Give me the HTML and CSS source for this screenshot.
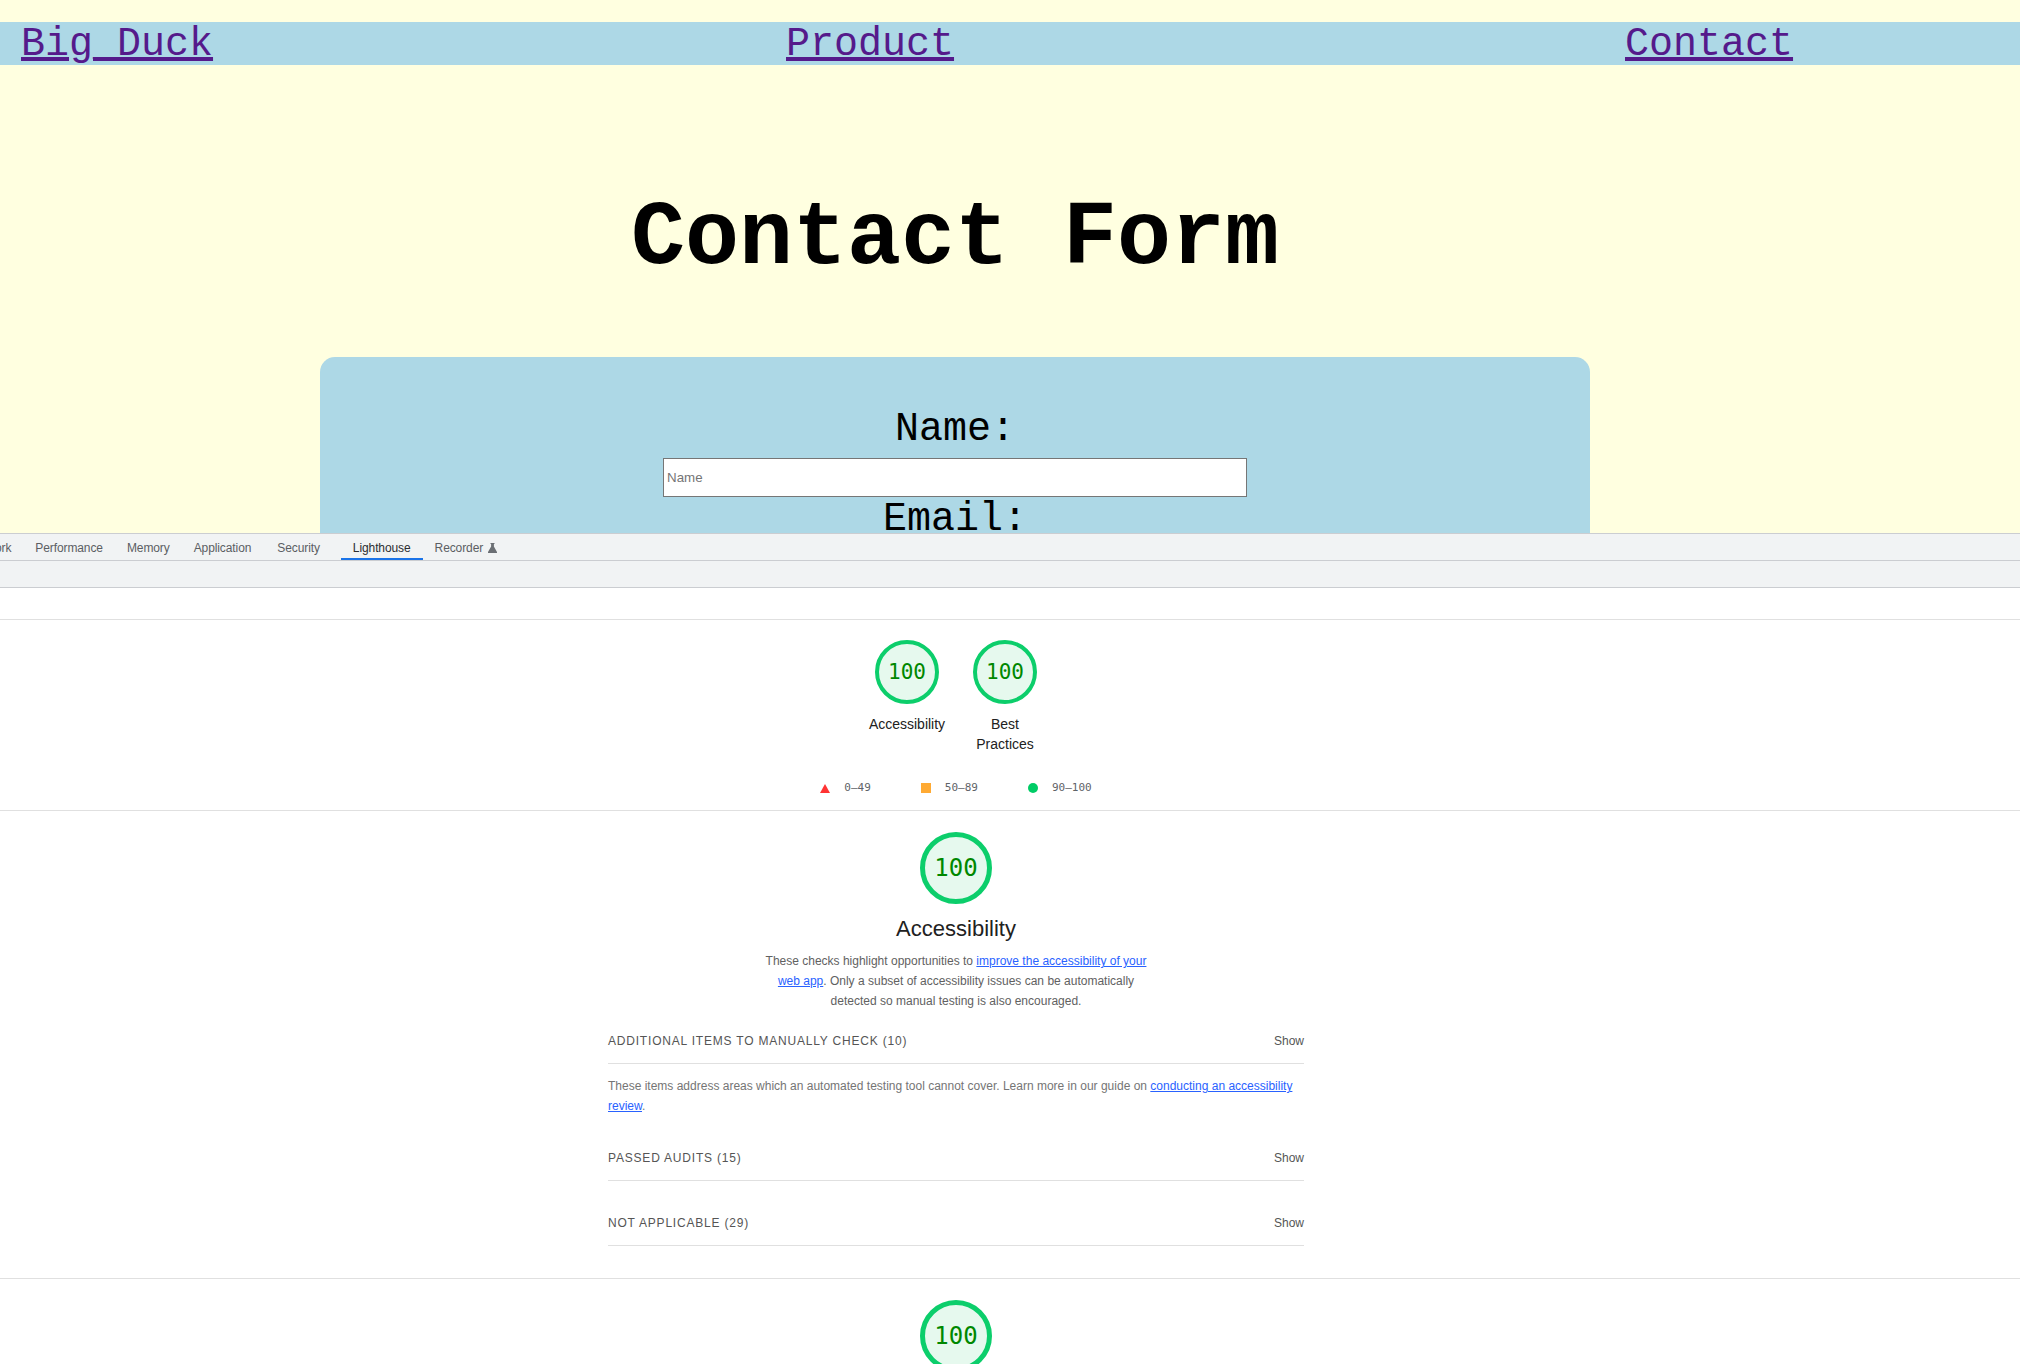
FILE: index.html
```html
<!DOCTYPE html>
<html lang="en">
<head>
<meta charset="utf-8">
<title>Contact Form</title>
<link rel="stylesheet" href="styles.css">
</head>
<body>
<div class="page">
  <nav class="nav">
    <a href="#" class="nav-link">Big_Duck</a>
    <a href="#" class="nav-link">Product</a>
    <a href="#" class="nav-link">Contact</a>
  </nav>
  <main class="main">
    <h1 class="title">Contact Form</h1>
    <form class="form-card">
      <label class="field-label" for="name">Name:</label>
      <input id="name" class="field-input" type="text" placeholder="Name">
      <label class="field-label" for="email">Email:</label>
      <input id="email" class="field-input" type="email" placeholder="Email">
    </form>
  </main>
</div>

<div class="devtools">
  <div class="tabbar">
    <div class="tab tab-network">Network</div>
    <div class="tab">Performance</div>
    <div class="tab">Memory</div>
    <div class="tab">Application</div>
    <div class="tab tab-security">Security</div>
    <div class="tab tab-active">Lighthouse</div>
    <div class="tab">Recorder
      <svg class="flask" width="9" height="10" viewBox="0 0 9 10"><path d="M2.5 0h4v1h-0.6v2.6L9 9v1H0V9l3.1-5.4V1h-0.6z" fill="#6b6f74"/></svg>
    </div>
  </div>
  <div class="toolbar"></div>
  <div class="report-topbar"></div>

  <section class="scores-section">
    <div class="center">
      <div class="gauges">
        <div class="gauge-wrap">
          <div class="gauge">100</div>
          <div class="gauge-label">Accessibility</div>
        </div>
        <div class="gauge-wrap">
          <div class="gauge">100</div>
          <div class="gauge-label">Best Practices</div>
        </div>
      </div>
      <div class="legend">
        <span class="legend-item"><span class="legend-fail"></span>0–49</span>
        <span class="legend-item"><span class="legend-avg"></span>50–89</span>
        <span class="legend-item"><span class="legend-pass"></span>90–100</span>
      </div>
    </div>
  </section>

  <section class="category">
    <div class="center">
      <div class="gauge gauge-lg">100</div>
      <h2 class="cat-title">Accessibility</h2>
      <p class="cat-desc">These checks highlight opportunities to <a href="#" class="lh-link">improve the accessibility of your<br>web app</a>. Only a subset of accessibility issues can be automatically<br>detected so manual testing is also encouraged.</p>
      <div class="groups">
        <div class="group group-first">
          <div class="group-header"><span>Additional items to manually check <span class="count">(10)</span></span><span class="show">Show</span></div>
          <p class="group-desc">These items address areas which an automated testing tool cannot cover. Learn more in our guide on <a href="#" class="lh-link">conducting an accessibility review</a>.</p>
        </div>
        <div class="group">
          <div class="group-header"><span>Passed audits <span class="count">(15)</span></span><span class="show">Show</span></div>
        </div>
        <div class="group">
          <div class="group-header"><span>Not applicable <span class="count">(29)</span></span><span class="show">Show</span></div>
        </div>
      </div>
    </div>
  </section>

  <section class="category">
    <div class="center">
      <div class="gauge gauge-lg">100</div>
    </div>
  </section>
</div>
</body>
</html>
```

FILE: styles.css
```css
html, body {
  margin: 0;
  padding: 0;
}

body {
  width: 2020px;
  height: 1364px;
  overflow: hidden;
  background: #ffffe0;
}

/* ---------- page ---------- */
.page {
  height: 533px;
  overflow: hidden;
  padding-top: 22px;
  box-sizing: border-box;
  background: #ffffe0;
}

.nav {
  height: 41px;
  padding-top: 2px;
  background: #add8e6;
  display: grid;
  grid-template-columns: 765px 839px auto;
  padding-left: 21px;
  font-family: "Liberation Mono", "Courier New", monospace;
  font-size: 40px;
  line-height: 41px;
}

.nav-link {
  color: #551a8b;
  text-decoration: underline;
  text-decoration-thickness: 4px;
  text-underline-offset: 2px;
  justify-self: start;
}

.main {
  width: 1910px;
  text-align: center;
  font-family: "Liberation Mono", "Courier New", monospace;
}

.title {
  margin: 123px 0 67px;
  font-size: 90px;
  font-weight: 700;
  line-height: 102px;
  color: #000;
}

.form-card {
  width: 1270px;
  margin: 0 auto;
  background: #add8e6;
  border-radius: 15px 15px 0 0;
  padding-top: 50px;
  height: 400px;
  display: flex;
  flex-direction: column;
  align-items: center;
}

.field-label {
  display: block;
  font-size: 40px;
  line-height: 45px;
  color: #000;
  margin-bottom: 6px;
}

.field-input {
  width: 584px;
  height: 39px;
  box-sizing: border-box;
  border: 1px solid #767676;
  padding: 1px 3px;
  font-family: "Liberation Sans", Arial, sans-serif;
  font-size: 13.33px;
  background: #fff;
  margin: 0;
}

.field-input::placeholder {
  color: #757575;
}

/* ---------- devtools ---------- */
.devtools {
  height: 831px;
  overflow: hidden;
  background: #fff;
  font-family: "Liberation Sans", Arial, sans-serif;
}

.tabbar {
  height: 26px;
  background: #f1f3f4;
  border-top: 1px solid #cbcdd1;
  border-bottom: 1px solid #cbcdd1;
  display: flex;
  overflow: hidden;
  white-space: nowrap;
}

.tab {
  flex: none;
  padding: 1px 12px 0;
  height: 26px;
  font-size: 12px;
  letter-spacing: -0.1px;
  color: #5b5e63;
  box-sizing: border-box;
  display: flex;
  align-items: center;
}

.tab-network {
  margin-left: -44px;
}

.tab-security {
  margin-left: 2px;
}

.tab-active {
  margin-left: 9px;
  color: #2b2d30;
  border-bottom: 2px solid #1a73e8;
  padding-top: 3px;
}

.flask {
  margin-left: 5px;
}

.toolbar {
  height: 26px;
  background: #f1f3f4;
  border-bottom: 1px solid #cbcdd1;
}

.report-topbar {
  height: 31px;
  border-bottom: 1px solid #e0e0e0;
}

.center {
  width: 1912px;
  display: flex;
  flex-direction: column;
  align-items: center;
}

.scores-section {
  padding-top: 20px;
  padding-bottom: 12px;
  border-bottom: 1px solid #e0e0e0;
}

.gauges {
  display: flex;
}

.gauge-wrap {
  width: 88px;
  margin: 0 5px;
  display: flex;
  flex-direction: column;
  align-items: center;
}

.gauge {
  width: 64px;
  height: 64px;
  box-sizing: border-box;
  border-radius: 50%;
  border: 4px solid #0cce6b;
  background: #e6f9ee;
  color: #008800;
  font-family: "DejaVu Sans Mono", monospace;
  font-size: 21px;
  display: flex;
  align-items: center;
  justify-content: center;
}

.gauge-label {
  margin-top: 10px;
  font-size: 14px;
  line-height: 20px;
  color: #212121;
  text-align: center;
}

.legend {
  margin-top: 24px;
  display: flex;
  gap: 50px;
  font-family: "DejaVu Sans Mono", monospace;
  font-size: 11px;
  line-height: 20px;
  color: #5f6368;
}

.legend-item {
  display: flex;
  align-items: center;
  gap: 14px;
}

.legend-fail {
  width: 0;
  height: 0;
  border-left: 5px solid transparent;
  border-right: 5px solid transparent;
  border-bottom: 9px solid #ff3333;
}

.legend-avg {
  width: 10px;
  height: 10px;
  background: #ffaa33;
}

.legend-pass {
  width: 10px;
  height: 10px;
  border-radius: 50%;
  background: #00cc66;
}

.category {
  padding-top: 21px;
  padding-bottom: 32px;
  border-bottom: 1px solid #e0e0e0;
}

.gauge-lg {
  width: 72px;
  height: 72px;
  border-width: 5px;
  font-size: 24px;
}

.cat-title {
  margin: 11px 0 0;
  font-size: 22px;
  font-weight: 400;
  line-height: 28px;
  color: #212121;
}

.cat-desc {
  margin: 8px 0 0;
  font-size: 12px;
  line-height: 20px;
  color: #616161;
  text-align: center;
}

.lh-link {
  color: #2962ff;
  text-decoration: underline;
}

.groups {
  width: 696px;
}

.group-header {
  display: flex;
  justify-content: space-between;
  padding: 32px 0 12px;
  border-bottom: 1px solid #e0e0e0;
  font-size: 12px;
  line-height: 20px;
  color: #555;
  text-transform: uppercase;
  letter-spacing: 0.8px;
}

.group-first .group-header {
  padding-top: 20px;
}

.show {
  text-transform: none;
  letter-spacing: 0;
}

.group-desc {
  margin: 12px 0 0;
  font-size: 12px;
  line-height: 20px;
  color: #757575;
}
```
